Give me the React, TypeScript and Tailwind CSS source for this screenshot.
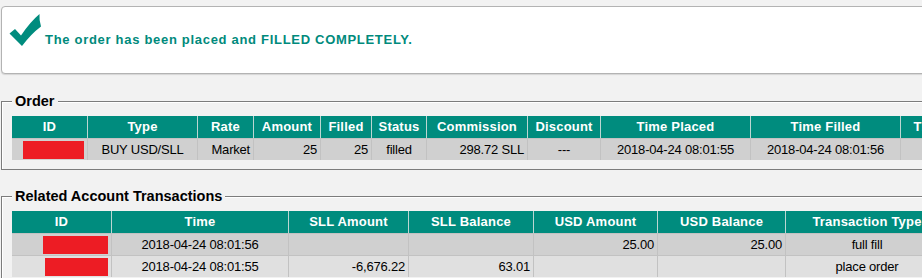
import React from "react";

const orderCols = [
  { h: "ID", w: 75, a: "right" },
  { h: "Type", w: 110, a: "center" },
  { h: "Rate", w: 56, a: "right" },
  { h: "Amount", w: 67, a: "right" },
  { h: "Filled", w: 51, a: "right" },
  { h: "Status", w: 55, a: "center" },
  { h: "Commission", w: 101, a: "right" },
  { h: "Discount", w: 73, a: "center" },
  { h: "Time Placed", w: 150, a: "center" },
  { h: "Time Filled", w: 150, a: "center" },
  { h: "Time Cancelled", w: 124, a: "center" },
];

const txCols = [
  { h: "ID", w: 99, a: "right" },
  { h: "Time", w: 177, a: "center" },
  { h: "SLL Amount", w: 120, a: "right" },
  { h: "SLL Balance", w: 125, a: "right" },
  { h: "USD Amount", w: 124, a: "right" },
  { h: "USD Balance", w: 128, a: "right" },
  { h: "Transaction Type", w: 163, a: "center" },
];

type Cell = string | { red: number };

const alignCls: Record<string, string> = {
  right: "justify-end text-right",
  center: "justify-center text-center",
  left: "justify-start text-left",
};

function Grid({
  cols,
  rows,
  rowBg,
}: {
  cols: { h: string; w: number; a: string }[];
  rows: Cell[][];
  rowBg: string[];
}) {
  return (
    <div className="flex flex-col" style={{ width: cols.reduce((s, c) => s + c.w, 0) }}>
      <div className="flex h-[22px] bg-[#008c7e]">
        {cols.map((c, i) => (
          <div
            key={i}
            style={{ width: c.w }}
            className={`flex items-center justify-center shrink-0 text-white font-bold text-[13px] tracking-[0.2px] whitespace-nowrap overflow-hidden ${
              i > 0 ? "border-l border-[#bcd6d2]" : ""
            }`}
          >
            {c.h}
          </div>
        ))}
      </div>
      {rows.map((r, ri) => (
        <div key={ri} className={`flex h-[22px] ${rowBg[ri]}`}>
          {cols.map((c, i) => {
            const v = r[i];
            return (
              <div
                key={i}
                style={{ width: c.w }}
                className={`flex items-center shrink-0 border-t border-[#c2c2c2] px-[3px] text-[13px] tracking-[-0.2px] text-black whitespace-nowrap overflow-hidden ${
                  alignCls[c.a]
                } ${i > 0 ? "border-l" : ""}`}
              >
                {typeof v === "string" ? (
                  v
                ) : (
                  <span className="block bg-[#ed1c24] h-[18px]" style={{ width: v.red }} />
                )}
              </div>
            );
          })}
        </div>
      ))}
    </div>
  );
}

function Fieldset({ title, children, className }: { title: string; children: React.ReactNode; className?: string }) {
  return (
    <fieldset
      className={`border border-[#7c7c7c] shadow-[inset_1px_1px_0_#ffffff] pl-[10px] pt-[7px] pb-[9px] min-w-0 ${className ?? ""}`}
    >
      <legend className="px-[3px] bg-[#f2f2f2] text-[14.5px] leading-[16px] font-bold text-black">
        {title}
      </legend>
      {children}
    </fieldset>
  );
}

export default function App() {
  return (
    <div
      className="w-[922px] h-[278px] overflow-hidden bg-[#f2f2f2]"
      style={{ fontFamily: '"Liberation Sans", Arial, sans-serif' }}
    >
      <div className="w-[1100px] pt-[6px] pl-[1px]">
        <div className="h-[68px] border border-[#b3b3b3] rounded-[4px] bg-white shadow-[0_1px_1px_rgba(0,0,0,0.12)] flex items-start">
          <svg
            width="33"
            height="34"
            viewBox="9 13 33 34"
            className="ml-[7px] mt-[6px] shrink-0"
          >
            <path
              d="M9.5 33.5 L15 29 L21 35.5 Q30 22 39.5 14 Q39 20 41 26.5 Q31 34 22 46 Z"
              fill="#008c7e"
            />
          </svg>
          <div className="ml-[3px] mt-[25px] text-[13px] leading-[15px] font-bold tracking-[0.7px] text-[#008a7c]">
            The order has been placed and FILLED COMPLETELY.
          </div>
        </div>

        <Fieldset title="Order" className="mt-[19px]">
          <Grid
            cols={orderCols}
            rowBg={["bg-[#d0d0d0]"]}
            rows={[[{ red: 61 }, "BUY USD/SLL", "Market", "25", "25", "filled", "298.72 SLL", "---", "2018-04-24 08:01:55", "2018-04-24 08:01:56", ""]]}
          />
        </Fieldset>

        <Fieldset title="Related Account Transactions" className="mt-[18px]">
          <Grid
            cols={txCols}
            rowBg={["bg-[#d0d0d0]", "bg-[#e0e0e0]"]}
            rows={[
              [{ red: 65 }, "2018-04-24 08:01:56", "", "", "25.00", "25.00", "full fill"],
              [{ red: 63 }, "2018-04-24 08:01:55", "-6,676.22", "63.01", "", "", "place order"],
            ]}
          />
        </Fieldset>
      </div>
    </div>
  );
}
